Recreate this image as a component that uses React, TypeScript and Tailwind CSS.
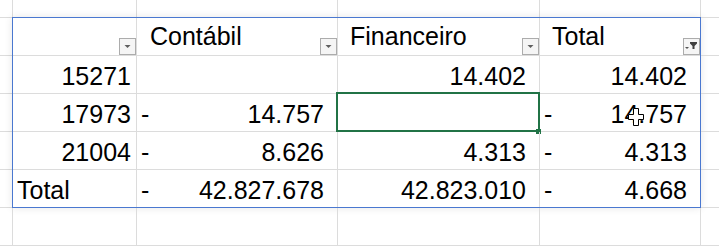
import React from 'react';

type Row = { label: string; c: [string, string]; f: [string, string]; t: [string, string] };

const rows: Row[] = [
  { label: '15271', c: ['', ''], f: ['', '14.402'], t: ['', '14.402'] },
  { label: '17973', c: ['-', '14.757'], f: ['', ''], t: ['-', '14.757'] },
  { label: '21004', c: ['-', '8.626'], f: ['', '4.313'], t: ['-', '4.313'] },
  { label: 'Total', c: ['-', '42.827.678'], f: ['', '42.823.010'], t: ['-', '4.668'] },
];

const FilterButton = ({ active = false }: { active?: boolean }) => (
  <div className="flex h-[17px] w-[17px] shrink-0 items-center justify-center border border-[#acacac] bg-[#f5f5f5]">
    {active ? (
      <svg width="15" height="15" viewBox="0 0 15 15">
        <path d="M1 8h4l-2 2z" fill="#555" />
        <path d="M6 3h7v1.5l-2.5 2.5v3h-2v-3L6 4.5z" fill="#3f3f3f" />
      </svg>
    ) : (
      <svg width="15" height="15" viewBox="0 0 15 15">
        <path d="M4.5 6h6l-3 3z" fill="#5f5f5f" />
      </svg>
    )}
  </div>
);

const Strip = ({ bottom = false }: { bottom?: boolean }) => (
  <div className={`flex ${bottom ? 'h-[38px] border-b border-[#dcdcdc]' : 'h-[17px]'}`}>
    <div className="w-[12px]" />
    <div className="w-[124px] border-l border-[#dcdcdc]" />
    <div className="w-[201px] border-l border-[#dcdcdc]" />
    <div className="w-[202px] border-l border-[#dcdcdc]" />
    <div className="w-[161px] border-l border-[#dcdcdc]" />
    <div className="flex-1 border-l border-[#dcdcdc]" />
  </div>
);

const Gutter = ({ width }: { width: string }) => (
  <div className={`flex flex-col border-t border-[#dcdcdc] ${width}`}>
    {[0, 1, 2, 3, 4].map((i) => (
      <div key={i} className="h-[38px] border-b border-[#dcdcdc]" />
    ))}
  </div>
);

const ValueCell = ({ v, width, last = false, children }: { v: [string, string]; width: string; last?: boolean; children?: React.ReactNode }) => (
  <div className={`relative flex items-end justify-between pb-[5px] pl-1 pr-[13px] ${width} ${last ? '' : 'border-r border-[#dcdcdc]'}`}>
    <span>{v[0]}</span>
    <span>{v[1]}</span>
    {children}
  </div>
);

const App = () => {
  return (
    <div
      className="flex h-[246px] w-[719px] flex-col overflow-hidden bg-white text-[25px] leading-6 text-black"
      style={{ fontFamily: '"Liberation Sans", Arial, sans-serif' }}
    >
      <Strip />
      <div className="flex">
        <Gutter width="w-[12px]" />
        <div className="flex w-[689px] flex-col border border-[#4a78d0] shadow-[0_0_8px_rgba(0,0,0,0.10)]">
          {/* header */}
          <div className="flex h-[38px] border-b border-[#dcdcdc]">
            <div className="flex w-[124px] items-end justify-end border-r border-[#dcdcdc]">
              <FilterButton />
            </div>
            <div className="flex w-[201px] items-end justify-between border-r border-[#dcdcdc]">
              <span className="pb-[7px] pl-[13px]">Contábil</span>
              <FilterButton />
            </div>
            <div className="flex w-[202px] items-end justify-between border-r border-[#dcdcdc]">
              <span className="pb-[7px] pl-3">Financeiro</span>
              <FilterButton />
            </div>
            <div className="flex flex-1 items-end justify-between">
              <span className="pb-[7px] pl-3">Total</span>
              <FilterButton active />
            </div>
          </div>
          {rows.map((r, i) => {
            const isTotal = r.label === 'Total';
            const selected = i === 1;
            return (
              <div key={r.label} className={`flex ${isTotal ? 'h-[37px]' : 'h-[38px] border-b border-[#dcdcdc]'}`}>
                <div
                  className={`flex w-[124px] items-end border-r border-[#dcdcdc] pb-[5px] ${
                    isTotal ? 'justify-start pl-1' : 'justify-end pr-[5px]'
                  }`}
                >
                  {r.label}
                </div>
                <ValueCell v={r.c} width="w-[201px]" />
                <ValueCell v={r.f} width="w-[202px]">
                  {selected && (
                    <>
                      <div className="absolute -bottom-px -left-[2px] -right-px -top-[2px] border-2 border-[#217346]" />
                      <div className="absolute -bottom-[3px] -right-[2px] h-[5px] w-[5px] bg-[#217346]" />
                    </>
                  )}
                </ValueCell>
                <ValueCell v={r.t} width="flex-1" last>
                  {selected && (
                    <svg className="absolute left-[88px] top-[14px]" width="16" height="18" viewBox="0 0 16 18">
                      <path
                        d="M5.5 0.5h5v6h5v5h-5v6h-5v-6h-5v-5h5z"
                        fill="#fff"
                        stroke="#000"
                        strokeWidth="1"
                      />
                    </svg>
                  )}
                </ValueCell>
              </div>
            );
          })}
        </div>
        <Gutter width="w-[18px]" />
      </div>
      <Strip bottom />
    </div>
  );
};

export default App;
